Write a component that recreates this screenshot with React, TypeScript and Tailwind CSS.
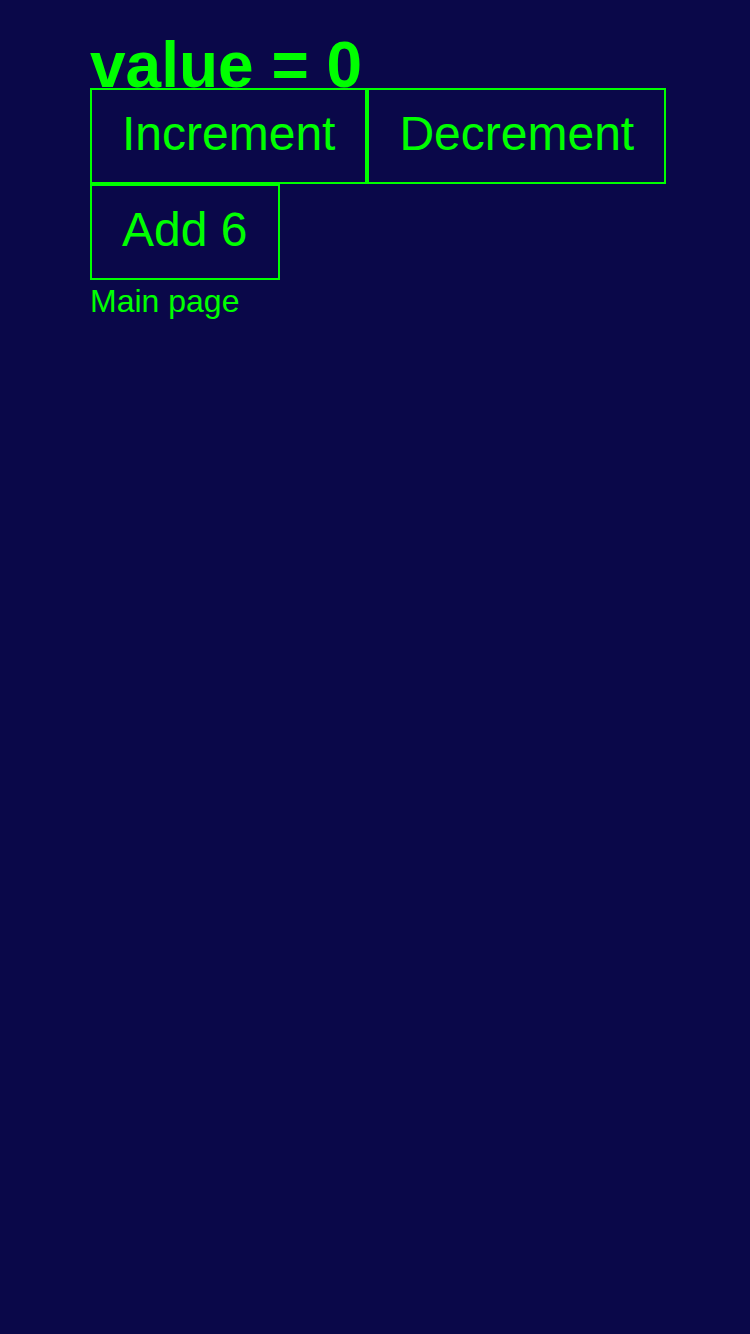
import React, { useState } from 'react';

const btn =
  'h-[96px] border-2 border-[#00ff00] text-[48px] leading-none text-[#00ff00] bg-transparent flex items-center justify-center pb-[4px]';

export default function App() {
  const [value, setValue] = useState(0);

  return (
    <div
      className="min-h-[1334px] w-full bg-[#0a0849] pl-[90px] text-[#00ff00]"
      style={{ fontFamily: '"Liberation Sans", Arial, sans-serif' }}
    >
      <h1 className="pt-[33px] h-[88px] text-[64px] leading-[64px] font-bold whitespace-nowrap">
        value = {value}
      </h1>
      <div className="flex">
        <button className={`${btn} px-[30px]`} onClick={() => setValue(value + 1)}>
          Increment
        </button>
        <button className={`${btn} px-[30px]`} onClick={() => setValue(value - 1)}>
          Decrement
        </button>
      </div>
      <div className="flex">
        <button className={`${btn} pl-[30px] pr-[31px]`} onClick={() => setValue(value + 6)}>
          Add 6
        </button>
      </div>
      <div className="text-[32px] leading-[32px] pt-[5px]">Main page</div>
    </div>
  );
}
